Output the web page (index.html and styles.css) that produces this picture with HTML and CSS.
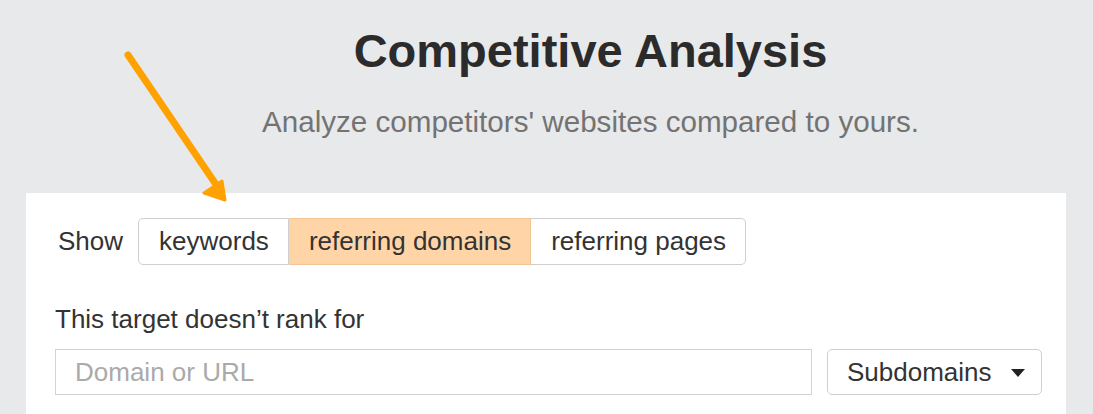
FILE: index.html
```html
<!DOCTYPE html>
<html>
<head>
<meta charset="utf-8">
<link rel="stylesheet" href="styles.css">
</head>
<body>
<div class="page">
  <header class="header">
    <h1 class="title">Competitive Analysis</h1>
    <p class="subtitle">Analyze competitors' websites compared to yours.</p>
  </header>
  <section class="card">
    <div class="show-row">
      <span class="show-label">Show</span>
      <div class="seg">
        <button class="seg-btn">keywords</button>
        <button class="seg-btn active">referring domains</button>
        <button class="seg-btn">referring pages</button>
      </div>
    </div>
    <div class="field-label">This target doesn’t rank for</div>
    <div class="input-row">
      <div class="input">Domain or URL</div>
      <div class="select">Subdomains <span class="caret"></span></div>
    </div>
  </section>
  <svg class="arrow" width="140" height="180" viewBox="0 0 140 180">
    <line x1="28" y1="15" x2="115" y2="143" stroke="#ffa200" stroke-width="7" stroke-linecap="round"/>
    <polygon points="125,160 104,153 122,141" fill="#ffa200" stroke="#ffa200" stroke-width="3" stroke-linejoin="round"/>
  </svg>
</div>
</body>
</html>
```
FILE: styles.css
```css
html, body {
  margin: 0;
  padding: 0;
}
body {
  background: #e8e9eb;
  font-family: "Liberation Sans", Arial, sans-serif;
  color: #333;
  width: 1093px;
  height: 414px;
  overflow: hidden;
}
.page {
  position: relative;
  height: 414px;
}
.header {
  padding-left: 88px;
  text-align: center;
  padding-top: 25px;
  height: 169px;
  box-sizing: border-box;
}
.title {
  margin: 0;
  font-size: 47px;
  line-height: 52px;
  font-weight: bold;
  color: #2b2b2b;
}
.subtitle {
  margin: 28px 0 0;
  font-size: 29.6px;
  line-height: 34px;
  color: #737373;
}
.card {
  margin: 24px 27px 0 26px;
  background: #fff;
  padding: 25px 24px 0 32px;
  height: 240px;
  box-sizing: border-box;
}
.show-row {
  display: flex;
  align-items: center;
}
.show-label {
  font-size: 26px;
  margin-right: 15px;
}
.seg {
  display: flex;
}
.seg-btn {
  font-family: inherit;
  font-size: 26px;
  color: #333;
  background: #fff;
  border: 1.5px solid #cfcfcf;
  height: 47px;
  padding: 0 19px 0 20px;
  margin: 0;
  border-left-width: 0;
}
.seg-btn:first-child {
  border-left-width: 1.5px;
  border-radius: 5px 0 0 5px;
}
.seg-btn:last-child {
  border-radius: 0 5px 5px 0;
}
.seg-btn.active {
  background: #ffd5a8;
  border-color: #f3c592;
}
.field-label {
  font-size: 26px;
  margin-top: 39px;
  margin-left: -3px;
  line-height: 30px;
}
.input-row {
  display: flex;
  margin-top: 15px;
  margin-left: -3px;
  gap: 15px;
}
.input {
  width: 757px;
  height: 46px;
  box-sizing: border-box;
  border: 1.5px solid #d3d3d3;
  font-size: 26px;
  color: #aaaaaa;
  padding-left: 19px;
  display: flex;
  align-items: center;
}
.select {
  width: 215px;
  height: 46px;
  box-sizing: border-box;
  border: 1.5px solid #cfcfcf;
  border-radius: 5px;
  font-size: 26px;
  color: #333;
  padding-left: 19px;
  display: flex;
  align-items: center;
}
.caret {
  width: 0;
  height: 0;
  border-left: 7px solid transparent;
  border-right: 7px solid transparent;
  border-top: 8px solid #222;
  margin-left: 19px;
  margin-top: 2px;
}
.arrow {
  position: absolute;
  left: 100px;
  top: 40px;
}
```
